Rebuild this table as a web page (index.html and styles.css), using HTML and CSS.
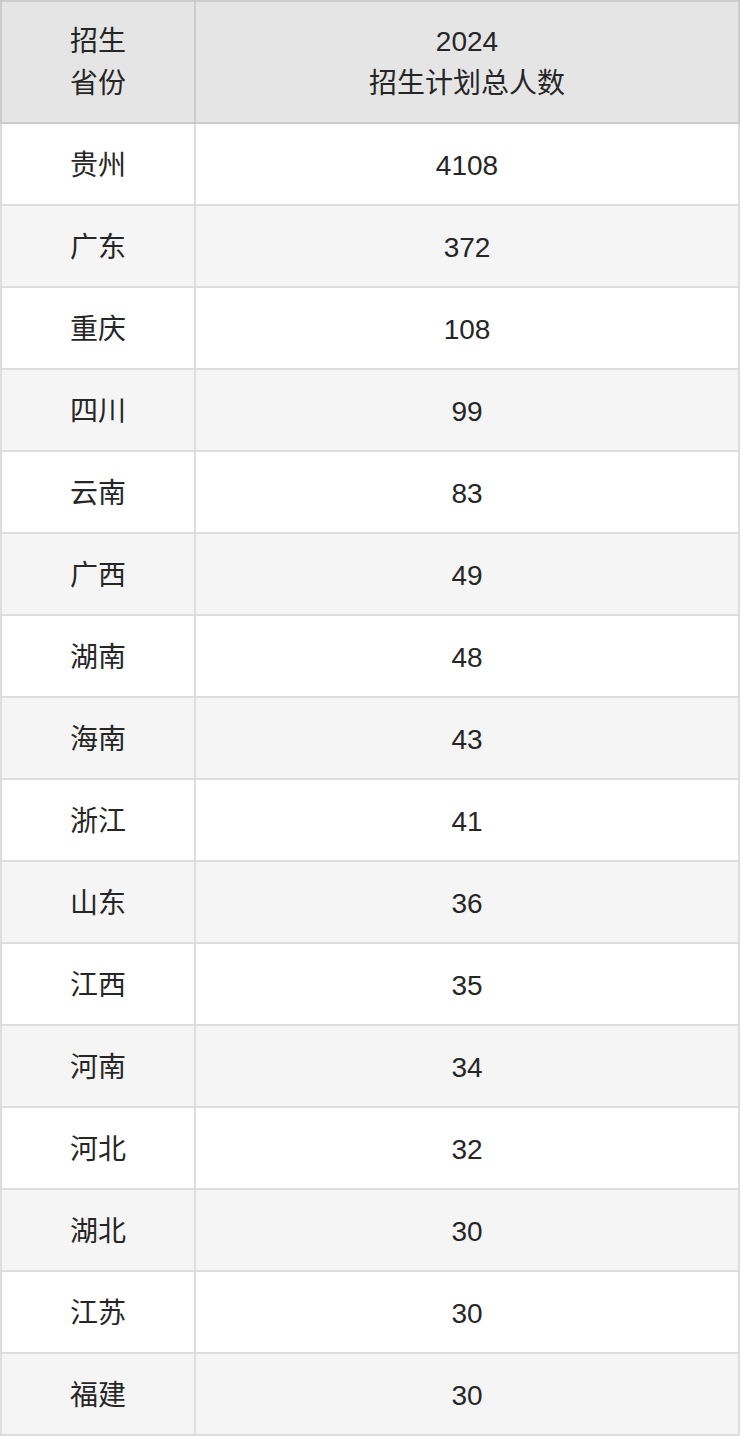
FILE: index.html
```html
<!DOCTYPE html>
<html lang="zh-CN">
<head>
<meta charset="utf-8">
<link rel="stylesheet" href="styles.css">
</head>
<body>
<table class="plan">
  <thead>
    <tr><th class="prov">招生<br>省份</th><th class="num">2024<br>招生计划总人数</th></tr>
  </thead>
  <tbody>
    <tr><td>贵州</td><td>4108</td></tr>
    <tr><td>广东</td><td>372</td></tr>
    <tr><td>重庆</td><td>108</td></tr>
    <tr><td>四川</td><td>99</td></tr>
    <tr><td>云南</td><td>83</td></tr>
    <tr><td>广西</td><td>49</td></tr>
    <tr><td>湖南</td><td>48</td></tr>
    <tr><td>海南</td><td>43</td></tr>
    <tr><td>浙江</td><td>41</td></tr>
    <tr><td>山东</td><td>36</td></tr>
    <tr><td>江西</td><td>35</td></tr>
    <tr><td>河南</td><td>34</td></tr>
    <tr><td>河北</td><td>32</td></tr>
    <tr><td>湖北</td><td>30</td></tr>
    <tr><td>江苏</td><td>30</td></tr>
    <tr><td>福建</td><td>30</td></tr>
  </tbody>
</table>
</body>
</html>
```
FILE: styles.css
```css
html, body {
  margin: 0;
  padding: 0;
  background: #ffffff;
}
.plan {
  width: 740px;
  border-collapse: collapse;
  table-layout: fixed;
  font-family: "Liberation Sans", "Noto Sans CJK SC", sans-serif;
  font-size: 28px;
  color: #262626;
}
.plan th,
.plan td {
  border: 2px solid #dddddd;
  text-align: center;
  vertical-align: middle;
  font-weight: normal;
}
.plan th {
  background: #e5e5e5;
  border-color: #cccccc;
  height: 118px;
  padding: 2px 0 0;
  line-height: 42px;
}
.plan .prov {
  width: 192px;
}
.plan td {
  height: 77px;
  padding: 3px 0 0;
  line-height: 40px;
}
.plan tbody tr:nth-child(odd) td {
  background: #ffffff;
}
.plan tbody tr:nth-child(even) td {
  background: #f5f5f5;
}
```
